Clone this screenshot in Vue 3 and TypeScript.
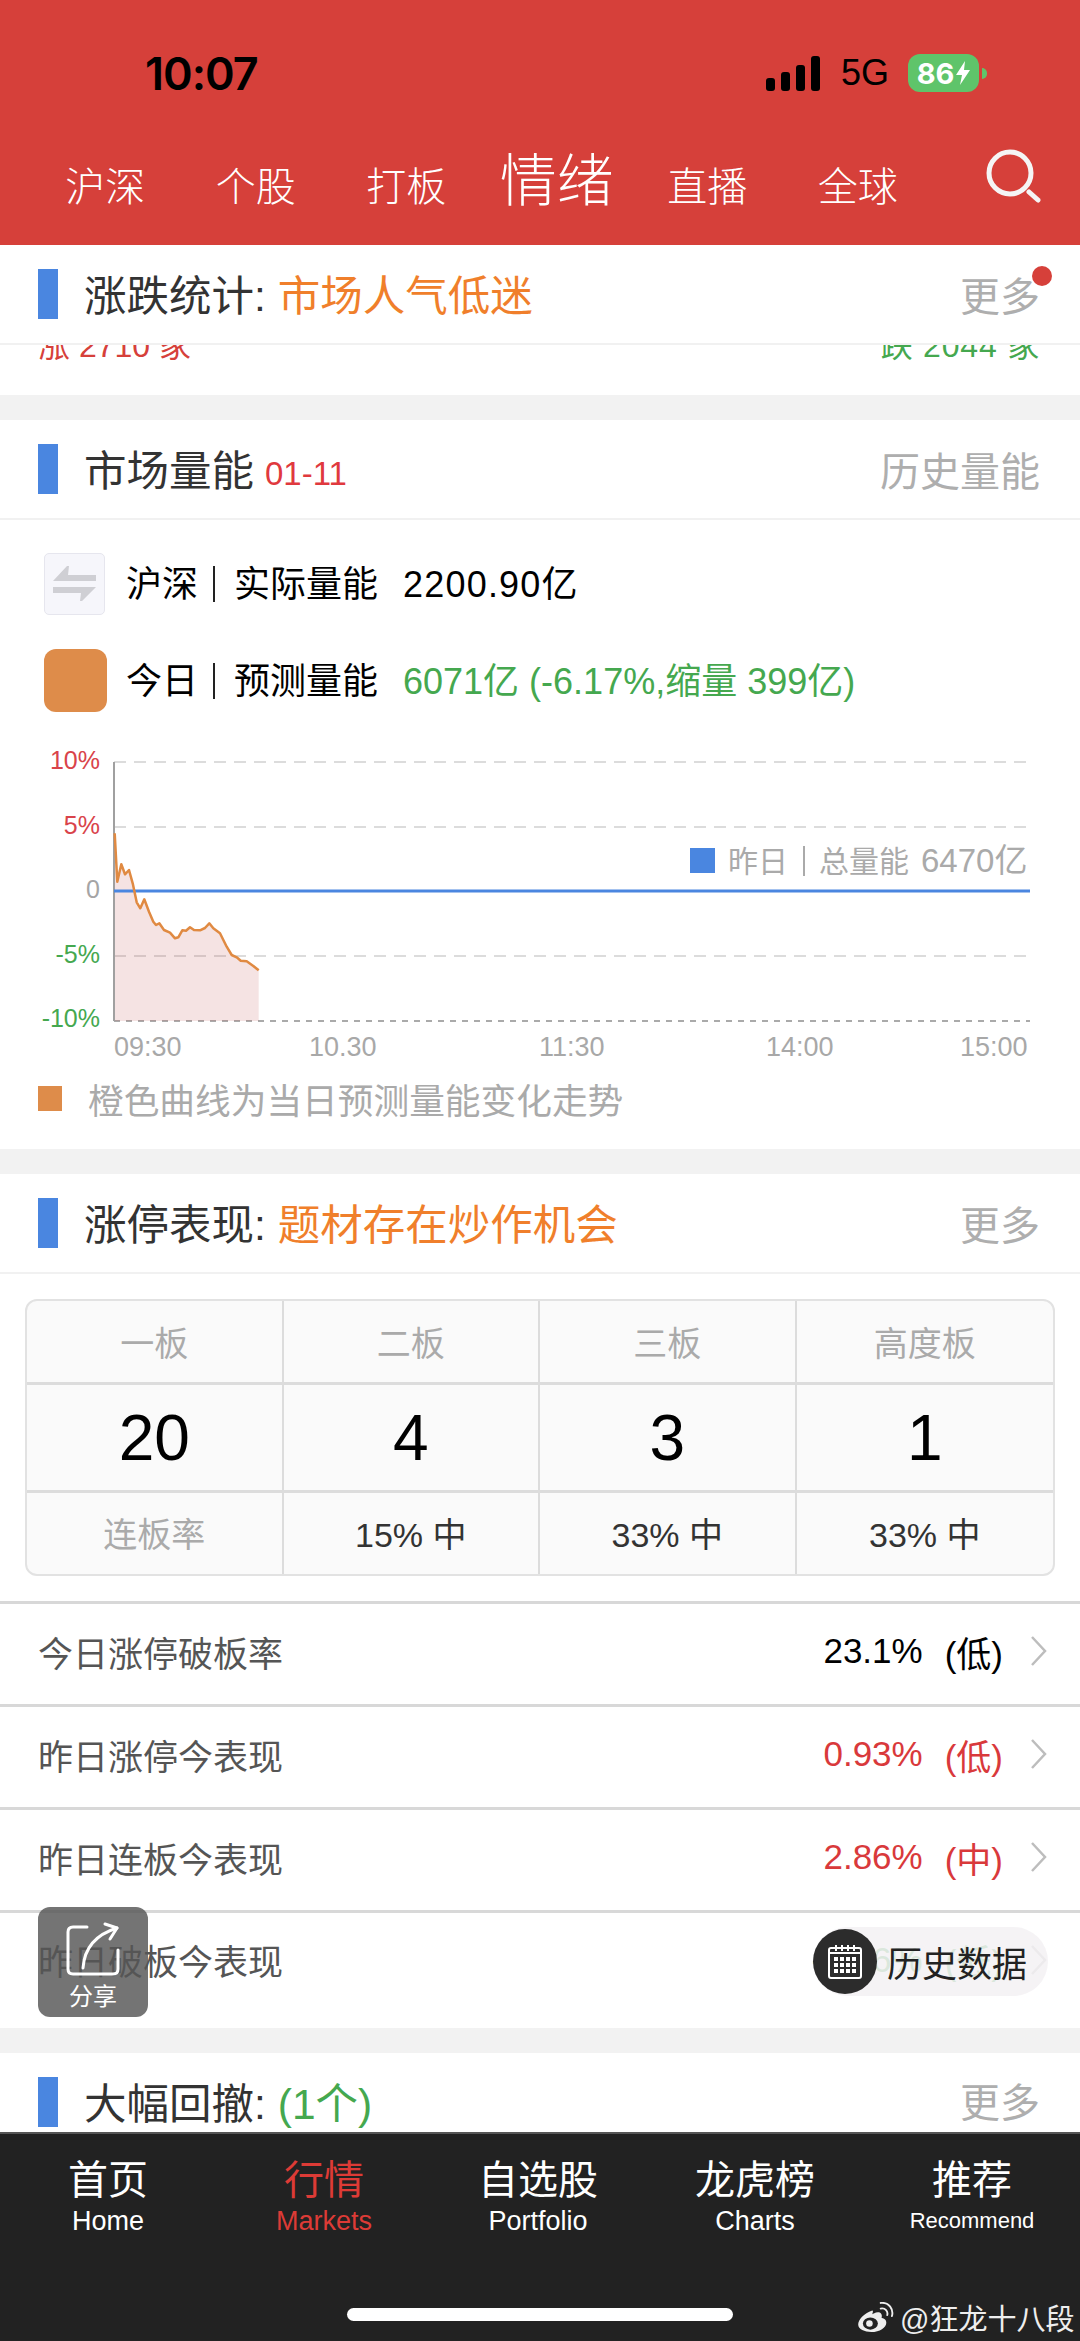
<script setup lang="ts">
const tabs = ['沪深', '个股', '打板', '情绪', '直播', '全球']

// curve traced in screen px (x, y)
const raw = [
  [344, 310], [352, 455], [364, 403], [375, 433], [387, 420], [398, 460], [410, 517], [421, 535], [433, 508],
  [447, 545], [460, 575], [468, 585], [478, 580], [492, 600], [510, 608], [525, 625], [535, 622], [547, 601],
  [558, 602], [570, 592], [582, 600], [600, 601], [615, 594], [628, 580], [640, 595], [660, 610], [680, 650],
  [695, 675], [710, 682], [722, 692], [740, 694], [760, 708], [776, 721]
]
const pts = raw.map(([x, y]) => [x / 3, y / 3 + 730])
const curve = pts.map(p => p[0].toFixed(1) + ',' + p[1].toFixed(1)).join(' ')
const area = `115,1021 ${curve} ${pts[pts.length - 1][0].toFixed(1)},1021`

const yLabels = [
  { t: '10%', y: 769, c: '#d9434a' },
  { t: '5%', y: 834, c: '#d9434a' },
  { t: '0', y: 898, c: '#a5a5a5' },
  { t: '-5%', y: 963, c: '#45a84f' },
  { t: '-10%', y: 1027, c: '#45a84f' }
]
const xLabels = [
  { t: '09:30', x: 114 },
  { t: '10.30', x: 309 },
  { t: '11:30', x: 539 },
  { t: '14:00', x: 766 },
  { t: '15:00', x: 960 }
]

const table = [
  { h: '一板', n: '20', r: '连板率', muted: true },
  { h: '二板', n: '4', r: '15% 中', muted: false },
  { h: '三板', n: '3', r: '33% 中', muted: false },
  { h: '高度板', n: '1', r: '33% 中', muted: false }
]

const rows = [
  { label: '今日涨停破板率', v: '23.1%', l: '(低)', c: 'black' },
  { label: '昨日涨停今表现', v: '0.93%', l: '(低)', c: 'red' },
  { label: '昨日连板今表现', v: '2.86%', l: '(中)', c: 'red' },
  { label: '昨日破板今表现', v: '-1.96%', l: '(低)', c: 'green' }
]

const footer = [
  { zh: '首页', en: 'Home' },
  { zh: '行情', en: 'Markets', active: true },
  { zh: '自选股', en: 'Portfolio' },
  { zh: '龙虎榜', en: 'Charts' },
  { zh: '推荐', en: 'Recommend', small: true }
]
</script>

<template>
  <div class="page">
    <header class="top">
      <div class="status">
        <span class="time">10:07</span>
        <span class="status-right">
          <span class="signal"><i></i><i></i><i></i><i></i></span>
          <span class="net">5G</span>
          <span class="battery">
            <span class="level">86</span>
            <svg width="14" height="24" viewBox="0 0 14 24"><path d="M9 0 L0 14 H6 L4 24 L14 9 H8 Z" fill="#fff" /></svg>
          </span>
          <span class="tip"></span>
        </span>
      </div>
      <nav class="nav">
        <span v-for="t in tabs" :key="t" class="tab" :class="{ on: t === '情绪' }">{{ t }}</span>
        <svg class="search" width="56" height="56" viewBox="0 0 56 56" fill="none" stroke="#f5f5f5">
          <circle cx="25" cy="25" r="21" stroke-width="5" />
          <line x1="44" y1="44" x2="53" y2="52" stroke-width="5" stroke-linecap="round" />
        </svg>
      </nav>
    </header>

    <main class="scroll">
      <section class="card">
        <div class="head">
          <i class="mark"></i>
          <span class="title">涨跌统计:</span><span class="tag orange">市场人气低迷</span>
          <span class="more dot">更多</span>
        </div>
        <div class="clipped">
          <span class="up">涨 2710 家</span>
          <span class="down">跌 2044 家</span>
        </div>
      </section>

      <section class="card">
        <div class="head">
          <i class="mark"></i>
          <span class="title">市场量能</span><span class="date">01-11</span>
          <span class="more">历史量能</span>
        </div>
        <div class="vol first">
          <span class="swap">
            <svg width="61" height="62" viewBox="0 0 61 62" fill="#cfcfd4">
              <path d="M9 28 L23 13 H25 L24 22 H52 V28 Z" />
              <path d="M9 34 H52 L38 48 H36 L37 40 H9 Z" />
            </svg>
          </span>
          <span class="vol-a">沪深</span><i class="sep"></i><span class="vol-b">实际量能</span>
          <span class="vol-v wide">2200.90亿</span>
        </div>
        <div class="vol second">
          <span class="today"></span>
          <span class="vol-a">今日</span><i class="sep"></i><span class="vol-b">预测量能</span>
          <span class="vol-v green">6071亿 (-6.17%,缩量 399亿)</span>
        </div>
        <svg class="chart" width="1080" height="330" viewBox="0 740 1080 330">
          <line x1="114" y1="762" x2="1030" y2="762" stroke="#dcdcdc" stroke-width="2" stroke-dasharray="12 8" />
          <line x1="114" y1="827" x2="1030" y2="827" stroke="#dcdcdc" stroke-width="2" stroke-dasharray="12 8" />
          <line x1="114" y1="956" x2="1030" y2="956" stroke="#dcdcdc" stroke-width="2" stroke-dasharray="12 8" />
          <line x1="114" y1="1021" x2="1030" y2="1021" stroke="#aaa" stroke-width="2" stroke-dasharray="6 6" />
          <polygon :points="area" fill="#c25050" fill-opacity="0.16" />
          <line x1="114" y1="762" x2="114" y2="1021" stroke="#a0a0a0" stroke-width="2" />
          <line x1="114" y1="891" x2="1030" y2="891" stroke="#4a86e0" stroke-width="3" />
          <polyline :points="curve" fill="none" stroke="#e08a42" stroke-width="2.5" stroke-linejoin="round" />
          <text v-for="l in yLabels" :key="l.t" x="100" :y="l.y" text-anchor="end" class="axis" :fill="l.c">{{ l.t }}</text>
          <text v-for="l in xLabels" :key="l.t" :x="l.x" y="1056" class="axis time-l" fill="#a8a8a8">{{ l.t }}</text>
          <rect x="690" y="848" width="25" height="25" fill="#4a86e0" />
          <text x="728" y="872" class="leg" fill="#aaa">昨日</text>
          <line x1="804" y1="846" x2="804" y2="876" stroke="#aaa" stroke-width="2" />
          <text x="819" y="872" class="leg" fill="#aaa">总量能</text>
          <text x="921" y="872" class="leg-v" fill="#aaa">6470亿</text>
        </svg>
        <div class="note">
          <i></i>
          <span>橙色曲线为当日预测量能变化走势</span>
        </div>
      </section>

      <section class="card">
        <div class="head">
          <i class="mark"></i>
          <span class="title">涨停表现:</span><span class="tag orange">题材存在炒作机会</span>
          <span class="more">更多</span>
        </div>
        <div class="grid">
          <div v-for="c in table" :key="c.h" class="col">
            <div class="cell h">{{ c.h }}</div>
            <div class="cell n">{{ c.n }}</div>
            <div class="cell r" :class="{ muted: c.muted }">{{ c.r }}</div>
          </div>
        </div>
        <div class="list">
          <div v-for="r in rows" :key="r.label" class="row">
            <span class="row-label">{{ r.label }}</span>
            <span class="row-v" :class="r.c">{{ r.v }}</span>
            <span class="row-l" :class="r.c">{{ r.l }}</span>
            <svg class="chev" width="18" height="30" viewBox="0 0 18 30" fill="none" stroke="#bdbdbd" stroke-width="2.5">
              <path d="M2 1 L15 15 L2 29" />
            </svg>
          </div>
        </div>
      </section>

      <section class="card">
        <div class="head last">
          <i class="mark"></i>
          <span class="title">大幅回撤:</span><span class="tag green">(1个)</span>
          <span class="more">更多</span>
        </div>
      </section>
    </main>

    <footer class="bottom">
      <div class="items">
        <div v-for="f in footer" :key="f.en" class="item" :class="{ active: f.active }">
          <span class="zh">{{ f.zh }}</span>
          <span class="en" :class="{ small: f.small }">{{ f.en }}</span>
        </div>
      </div>
      <div class="home-bar"></div>
    </footer>

    <div class="share">
      <svg width="60" height="60" viewBox="0 0 60 60" fill="none" stroke="#fff" stroke-width="3" stroke-linecap="round" stroke-linejoin="round">
        <path d="M24 5 H10 Q5 5 5 10 V47 Q5 52 10 52 H50 Q55 52 55 47 V28" />
        <path d="M20 46 Q22 16 54 6" />
        <path d="M42 2 L54 6 L47 17" />
      </svg>
      <span>分享</span>
    </div>

    <div class="history">
      <span class="cal">
        <svg width="36" height="36" viewBox="0 0 36 36" fill="none" stroke="#fff" stroke-width="2">
          <rect x="2" y="4" width="32" height="30" rx="2" />
          <path d="M2 9 H34 M9 1 V7 M15 1 V7 M21 1 V7 M27 1 V7" />
          <path d="M7 15 H29 M7 21 H29 M7 27 H29" stroke-width="4" stroke-dasharray="4 2" />
        </svg>
      </span>
      <span class="history-t">历史数据</span>
    </div>

    <div class="mark-w">
      <svg width="38" height="30" viewBox="0 0 40 32">
        <path d="M16 9 C7 12 1 19 1 24 C1 29 8 32 15 32 C24 32 31 27 31 22 C31 18 27 17 26 17 C27 13 25 11 22 11 C19 11 17 13 16 13 C17 10 17 9 16 9 Z" fill="#eee" />
        <ellipse cx="14" cy="23" rx="8" ry="6.5" fill="#222" />
        <circle cx="13" cy="23" r="3.5" fill="#eee" />
        <path d="M25 7 C30 6 33 10 32 14 M25 1 C34 0 39 8 37 15" fill="none" stroke="#eee" stroke-width="2" stroke-linecap="round" />
      </svg>
      <span>@狂龙十八段</span>
    </div>
  </div>
</template>

<style>
body {
  margin: 0;
  background: #fff;
}
</style>

<style scoped>
.page {
  position: relative;
  display: flex;
  flex-direction: column;
  width: 1080px;
  height: 2341px;
  overflow: hidden;
  background: #f2f2f2;
  font-family: "Liberation Sans", "Noto Sans CJK SC", sans-serif;
}

.top {
  flex: none;
  height: 245px;
  box-sizing: border-box;
  background: #d6403a;
}

.status {
  display: flex;
  justify-content: space-between;
  align-items: center;
  height: 44px;
  padding: 51px 93px 0 145px;
}

.time {
  font-family: Inter, sans-serif;
  font-size: 45px;
  font-weight: 600;
  letter-spacing: -1px;
  color: #000;
}

.status-right {
  display: flex;
  align-items: center;
}

.signal {
  display: flex;
  align-items: flex-end;
  gap: 6px;
  height: 35px;
  margin-right: 21px;
}

.signal i {
  display: block;
  width: 9px;
  border-radius: 3px;
  background: #000;
}

.signal i:nth-child(1) { height: 13px; }
.signal i:nth-child(2) { height: 19px; }
.signal i:nth-child(3) { height: 26px; }
.signal i:nth-child(4) { height: 35px; }

.net {
  font-size: 36px;
  color: #000;
  margin-right: 19px;
}

.battery {
  display: flex;
  align-items: center;
  justify-content: center;
  gap: 2px;
  width: 71px;
  height: 38px;
  border-radius: 12px;
  background: #5fc46a;
}

.level {
  font-family: Inter, sans-serif;
  font-size: 29px;
  font-weight: 700;
  color: #fff;
}

.tip {
  width: 5px;
  height: 11px;
  margin-left: 3px;
  border-radius: 0 6px 6px 0;
  background: #5fc46a;
}

.nav {
  position: relative;
  display: flex;
  align-items: baseline;
  margin-top: 40px;
  padding-left: 30px;
}

.tab {
  width: 150.5px;
  text-align: center;
  font-size: 40px;
  font-weight: 300;
  color: #fff;
}

.tab.on {
  font-size: 57px;
}

.search {
  position: absolute;
  left: 985px;
  top: 13px;
}

.scroll {
  flex: 1;
  min-height: 0;
  overflow: hidden;
}

.card {
  background: #fff;
  margin-bottom: 25px;
}

.head {
  display: flex;
  align-items: center;
  box-sizing: border-box;
  height: 100px;
  padding: 0 40px 0 38px;
  border-bottom: 2px solid #f1f1f1;
  font-size: 42.5px;
  line-height: 1;
}

.head.last {
  border-bottom: none;
  height: 79px;
  padding-top: 20px;
  padding-bottom: 0;
  align-items: flex-start;
  overflow: hidden;
}

.mark {
  flex: none;
  width: 20px;
  height: 50px;
  margin-right: 26px;
  background: #4a86e0;
}

.head.last .mark {
  margin-top: 4px;
}

.title {
  color: #333;
  margin-right: 12px;
  margin-top: 6px;
}

.tag {
  margin-top: 6px;
}

.head.last .title,
.head.last .tag {
  margin-top: 11px;
}

.orange { color: #f07f2b; }
.green { color: #45a84f; }

.date {
  font-size: 33px;
  color: #e0393e;
  margin-left: -1px;
  margin-top: 9px;
}

.more {
  margin-left: auto;
  margin-top: 5px;
  position: relative;
  font-size: 40px;
  color: #aeaeae;
}

.head.last .more {
  margin-top: 10px;
}

.more.dot::after {
  content: "";
  position: absolute;
  right: -12px;
  top: -11px;
  width: 20px;
  height: 20px;
  border-radius: 50%;
  background: #d6403a;
}

.clipped {
  display: flex;
  justify-content: space-between;
  height: 50px;
  padding: 0 40px 0 38px;
  overflow: hidden;
  font-size: 32px;
  line-height: 40px;
}

.clipped span {
  margin-top: -19px;
}

.up { color: #d6403a; }
.down { color: #45a84f; letter-spacing: 0.8px; }

.vol {
  display: flex;
  align-items: center;
  height: 63px;
  padding-left: 44px;
  font-size: 36px;
  color: #000;
}

.vol.first {
  margin-top: 32px;
}

.vol.second {
  margin-top: 34px;
}

.vol-a,
.vol-b,
.vol-v {
  margin-bottom: 6px;
}

.swap {
  flex: none;
  width: 61px;
  height: 62px;
  box-sizing: border-box;
  border: 1px solid #e6e6ee;
  border-radius: 5px;
  background: #f6f6fb;
  margin-right: 21px;
}

.swap svg {
  display: block;
  margin: -1px;
}

.today {
  flex: none;
  width: 63px;
  height: 63px;
  border-radius: 12px;
  background: #de8c4a;
  margin-right: 19px;
}

.sep {
  flex: none;
  width: 2px;
  height: 36px;
  margin: 0 19px 0 15px;
  background: #222;
}

.vol-v {
  margin-left: 25px;
}

.vol-v.wide {
  letter-spacing: 1.2px;
}

.chart {
  display: block;
  margin-top: 28px;
}

.axis {
  font-size: 25px;
}

.time-l {
  font-size: 27px;
}

.leg {
  font-size: 30px;
}

.leg-v {
  font-size: 33px;
}

.note {
  display: flex;
  align-items: center;
  height: 36px;
  margin-top: 10px;
  padding: 0 38px 33px;
  font-size: 35.7px;
  color: #aaa;
}

.note i {
  flex: none;
  width: 24px;
  height: 25px;
  margin-right: 26px;
  background: #de8c4a;
}

.grid {
  display: grid;
  grid-template-columns: repeat(4, 1fr);
  margin: 25px 25px 0;
  border: 2px solid #e2e2e2;
  border-radius: 12px;
  overflow: hidden;
  background: #fafafa;
}

.col:not(:last-child) {
  border-right: 2px solid #dcdcdc;
}

.cell {
  display: flex;
  align-items: center;
  justify-content: center;
}

.cell.h {
  height: 81px;
  font-size: 34px;
  color: #aaa;
}

.cell.n {
  height: 105px;
  border-top: 3px solid #dcdcdc;
  border-bottom: 3px solid #dcdcdc;
  font-size: 64px;
  color: #000;
}

.cell.r {
  height: 81px;
  padding-bottom: 2px;
  box-sizing: border-box;
  font-size: 34px;
  color: #333;
}

.cell.r.muted {
  color: #aaa;
}

.list {
  margin-top: 25px;
}

.row {
  display: flex;
  align-items: center;
  box-sizing: border-box;
  height: 103px;
  padding: 0 32px 6px 38px;
  border-top: 3px solid #d8d8d8;
  font-size: 35px;
}

.row:last-child {
  height: 118px;
  padding-bottom: 22px;
}

.row-label {
  margin-right: auto;
  color: #555;
}

.row-l {
  margin: 0 27px 0 22px;
}

.black { color: #000; }
.red { color: #d9393b; }

.chev {
  flex: none;
}

.bottom {
  flex: none;
  display: flex;
  flex-direction: column;
  box-sizing: border-box;
  height: 209px;
  border-top: 2px solid #555;
  background: #222;
}

.items {
  display: grid;
  grid-template-columns: repeat(5, 216px);
  padding-top: 22px;
}

.item {
  display: flex;
  flex-direction: column;
  align-items: center;
  color: #fff;
}

.item:nth-child(3) {
  padding-right: 4px;
}

.item:nth-child(4) {
  padding-right: 2px;
}

.item.active {
  color: #dd3b36;
}

.zh {
  font-size: 40px;
  line-height: 48px;
}

.en {
  margin-top: 1px;
  font-size: 27px;
  line-height: 32px;
}

.en.small {
  font-size: 22px;
}

.home-bar {
  width: 386px;
  height: 13px;
  margin: auto auto 20px;
  border-radius: 7px;
  background: #fff;
}

.share {
  position: absolute;
  left: 38px;
  top: 1907px;
  display: flex;
  flex-direction: column;
  align-items: center;
  width: 110px;
  height: 110px;
  border-radius: 12px;
  background: rgba(85, 85, 85, 0.82);
  color: #fff;
  font-size: 24px;
}

.share svg {
  margin-top: 15px;
}

.share span {
  line-height: 30px;
}

.history {
  position: absolute;
  left: 813px;
  top: 1927px;
  display: flex;
  align-items: center;
  box-sizing: border-box;
  width: 235px;
  height: 69px;
  border-radius: 35px;
  background: rgba(243, 241, 243, 0.86);
}

.cal {
  display: flex;
  align-items: center;
  justify-content: center;
  flex: none;
  width: 64px;
  height: 65px;
  border-radius: 50%;
  background: #2c2c2c;
}

.history-t {
  margin-left: 10px;
  font-size: 35px;
  color: #222;
}

.mark-w {
  position: absolute;
  left: 857px;
  top: 2296px;
  display: flex;
  align-items: center;
  gap: 5px;
  white-space: nowrap;
  font-size: 29px;
  color: #eee;
}

.mark-w svg {
  flex: none;
}
</style>
